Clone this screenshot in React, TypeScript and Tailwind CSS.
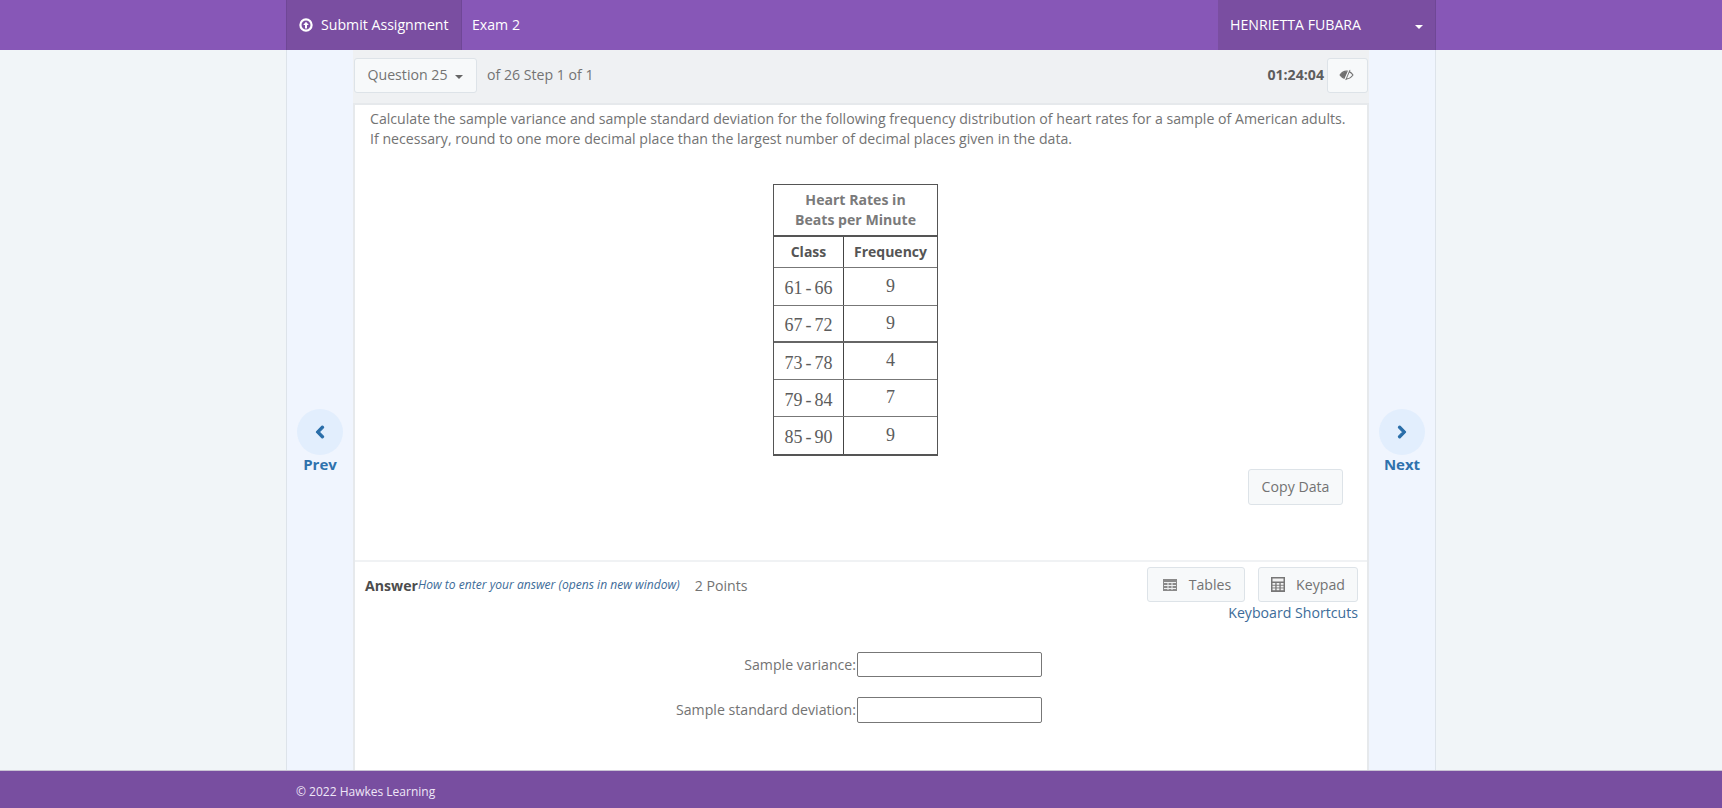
import React from "react";
import { FaChevronLeft, FaChevronRight } from "react-icons/fa";

const OS = "font-['Open_Sans',sans-serif]";
const BTN = "border border-[#dde3e8] rounded-[3px] bg-[#f7f9fa] text-[#737373] flex items-center justify-center";

function TableIcon() {
  return (
    <svg width="14" height="12" viewBox="0 0 14 12" fill="none">
      <rect x="0" y="0" width="14" height="12" fill="#8a8a8a" />
      <path d="M1 3.5H13M1 6.5H13M1 9.5H13M5 3V11M9 3V11" stroke="#eef0f1" strokeWidth="1" />
    </svg>
  );
}
function CalcIcon() {
  return (
    <svg width="14" height="15" viewBox="0 0 14 15">
      <rect x="0" y="0" width="14" height="15" fill="#777" />
      <rect x="1.5" y="1.5" width="11" height="3" fill="#f2f2f2" />
      {[6, 8.7, 11.4].map((y) =>
        [1.5, 5.6, 9.7].map((x) => <rect key={`${x}-${y}`} x={x} y={y} width="2.8" height="1.8" fill="#f2f2f2" />)
      )}
    </svg>
  );
}
function UpIcon() {
  return (
    <svg width="14" height="14" viewBox="0 0 14 14" fill="none" stroke="#fff">
      <circle cx="7" cy="7" r="5.6" strokeWidth="2.2" />
      <path d="M7 10.5V5" strokeWidth="2" />
      <path d="M4.2 7 7 3.8 9.8 7Z" fill="#fff" stroke="none" />
    </svg>
  );
}
function EyeIcon() {
  return (
    <svg width="15" height="12" viewBox="0 0 16 13" fill="none" className="mr-[2px]">
      <path d="M1 6.5C3 3.6 5.4 2.3 8 2.3 10.6 2.3 13 3.6 15 6.5 13 9.4 10.6 10.7 8 10.7 5.4 10.7 3 9.4 1 6.5Z" stroke="#707070" strokeWidth="1.2" />
      <path d="M1.5 6.5C3 4.2 5 3 7.5 3L9.5 3.2 6.4 10.3C4.4 9.9 2.8 8.5 1.5 6.5Z" fill="#707070" />
      <path d="M11 0.5 6 12" stroke="#f7f9fa" strokeWidth="1.4" />
      <path d="M11.8 1 7.2 12" stroke="#707070" strokeWidth="1" />
    </svg>
  );
}

function Nav({ label, left }: { label: string; left?: boolean }) {
  return (
    <div className="flex-1 flex flex-col items-center justify-center pb-[2px] pt-[64px]">
      <div className="w-[46px] h-[46px] rounded-full bg-[#e2eefd] flex items-center justify-center text-[#2a6ea9] text-[14px]">
        {left ? (
          <FaChevronLeft className="stroke-[#2a6ea9] stroke-[40px]" />
        ) : (
          <FaChevronRight className="stroke-[#2a6ea9] stroke-[40px]" />
        )}
      </div>
      <div className="text-[15px] leading-[18px] font-bold text-[#2f72ad]">{label}</div>
    </div>
  );
}

const rows = [
  ["61 - 66", "9", "h-[38px] border-b border-[#777]"],
  ["67 - 72", "9", "h-[37px] border-b-2 border-[#666]"],
  ["73 - 78", "4", "h-[37px] border-b border-[#777]"],
  ["79 - 84", "7", "h-[37px] border-b border-[#777]"],
  ["85 - 90", "9", "h-[37px]"],
];

function FreqTable() {
  return (
    <div className="w-[165px] border border-[#555] border-b-2 text-[#5c5c5c]">
      <div className="h-[52px] border-b-2 border-[#555] flex flex-col justify-center pb-[1px] text-center text-[14.1px] leading-[20px] font-bold text-[#7a7a7a]">
        <div>Heart Rates in</div>
        <div>Beats per Minute</div>
      </div>
      <div className="grid grid-cols-[70px_1fr] h-[31px] border-b border-[#777] text-[14px] font-bold text-[#555]">
        <div className="border-r border-[#444] flex items-center justify-center">Class</div>
        <div className="flex items-center justify-center">Frequency</div>
      </div>
      {rows.map(([c, f, cls]) => (
        <div key={c} className={`grid grid-cols-[70px_1fr] font-['Liberation_Serif',serif] text-[18px] ${cls}`}>
          <div className="border-r border-[#444] flex items-center justify-center pt-[3px] [word-spacing:-1.5px]">{c}</div>
          <div className="flex items-center justify-center pb-[2px]">{f}</div>
        </div>
      ))}
    </div>
  );
}

export default function App() {
  return (
    <div className={`h-screen flex flex-col overflow-hidden bg-[#f1f5f8] ${OS}`}>
      <header className="h-[50px] shrink-0 bg-[#8757b7] flex justify-center text-white text-[14.15px]">
        <div className="w-[1150px] flex items-stretch">
          <div className="w-[176px] bg-[#7a4ea1] border-x border-[#6f4796] flex items-center gap-[8px] pl-[12px]">
            <UpIcon />
            <span>Submit Assignment</span>
          </div>
          <div className="flex-1 flex items-center pl-[10px]">Exam 2</div>
          <div className="w-[218px] bg-[#7a4ea1] border-r border-[#6f4796] flex items-center justify-between pl-[12px] pr-[12px]">
            <span>HENRIETTA FUBARA</span>
            <span className="mt-[3px] border-x-[4px] border-x-transparent border-t-[4px] border-t-white" />
          </div>
        </div>
      </header>

      <main className="flex-1 min-h-0 flex justify-center">
        <div className="w-[1150px] flex border-x border-[#dde3ea]">
          <div className="w-[66px] shrink-0 bg-[#f0f5fe] flex flex-col"><Nav label="Prev" left /></div>
          <div className="w-[1016px] shrink-0 flex flex-col bg-[#eff1f3]">
            <div className="h-[53px] shrink-0 flex items-center pl-[1px] pr-[1px] pb-[3px] text-[14.15px] text-[#737373]">
              <div className={`${BTN} w-[123px] h-[35px] gap-[8px]`}>
                <span>Question 25</span>
                <span className="mt-[3px] border-x-[4px] border-x-transparent border-t-[4px] border-t-[#666]" />
              </div>
              <span className="ml-[10px] -mt-[1px]">of 26 Step 1 of 1</span>
              <span className="ml-auto mr-[3px] font-bold text-[#5d5d5d] -mt-[1px]">01:24:04</span>
              <div className={`${BTN} w-[41px] h-[35px]`}>
                <EyeIcon />
              </div>
            </div>
            <div className="flex-1 min-h-0 bg-white border-x-2 border-[#e6e9ec] border-t-2 flex flex-col text-[#737373]">
              <div className="h-[457px] shrink-0 border-b-2 border-[#f0f2f4] flex flex-col pl-[15px] pr-[14px] text-[14.15px] leading-[20px]">
                <p className="pt-[4px] whitespace-nowrap">
                  Calculate the sample variance and sample standard deviation for the following frequency distribution of heart rates for a sample of American adults.
                  <br />
                  If necessary, round to one more decimal place than the largest number of decimal places given in the data.
                </p>
                <div className="mt-[35px] pl-[403px]"><FreqTable /></div>
                <div className="mt-[13px] flex justify-end pr-[10px]">
                  <div className={`${BTN} w-[95px] h-[36px]`}>Copy Data</div>
                </div>
              </div>
              <div className="flex-1 min-h-0 pl-[10px] pr-[9px] pt-[5px] text-[14.15px]">
                <div className="flex items-start justify-between">
                  <div className="flex items-center h-[37px] whitespace-nowrap">
                    <span className="font-bold text-[#4d4d4d]">Answer</span>
                    <span className="italic text-[12.1px] text-[#3d6c99]">How to enter your answer (opens in new window)</span>
                    <span className="ml-[15px]">2 Points</span>
                  </div>
                  <div className="flex flex-col items-end">
                    <div className="flex gap-[13px]">
                      <div className={`${BTN} w-[98px] h-[35px] gap-[12px] pl-[2px]`}><TableIcon /><span>Tables</span></div>
                      <div className={`${BTN} w-[100px] h-[35px] gap-[11px]`}><CalcIcon /><span>Keypad</span></div>
                    </div>
                    <span className="mt-[1px] leading-[20px] text-[#3d6c99]">Keyboard Shortcuts</span>
                  </div>
                </div>
                <div className="mt-[29px] pl-[99px] flex flex-col gap-[20px]">
                  {[["Sample variance:", "h-[25px]"], ["Sample standard deviation:", "h-[26px]"]].map(([l, h]) => (
                    <div key={l} className="grid grid-cols-[392px_185px] gap-x-[1px] items-center">
                      <span className="text-right">{l}</span>
                      <div className={`${h} border border-[#777] rounded-[2px] bg-white`} />
                    </div>
                  ))}
                </div>
              </div>
            </div>
          </div>
          <div className="flex-1 bg-[#f0f5fe] flex flex-col"><Nav label="Next" /></div>
        </div>
      </main>

      <footer className="h-[38px] shrink-0 bg-[#784ea0] border-t border-[#c9c3d4] flex justify-center">
        <div className="w-[1150px] pl-[10px] pt-[4px] flex items-center text-[12px] text-[#efe6f7]">© 2022 Hawkes Learning</div>
      </footer>
    </div>
  );
}
